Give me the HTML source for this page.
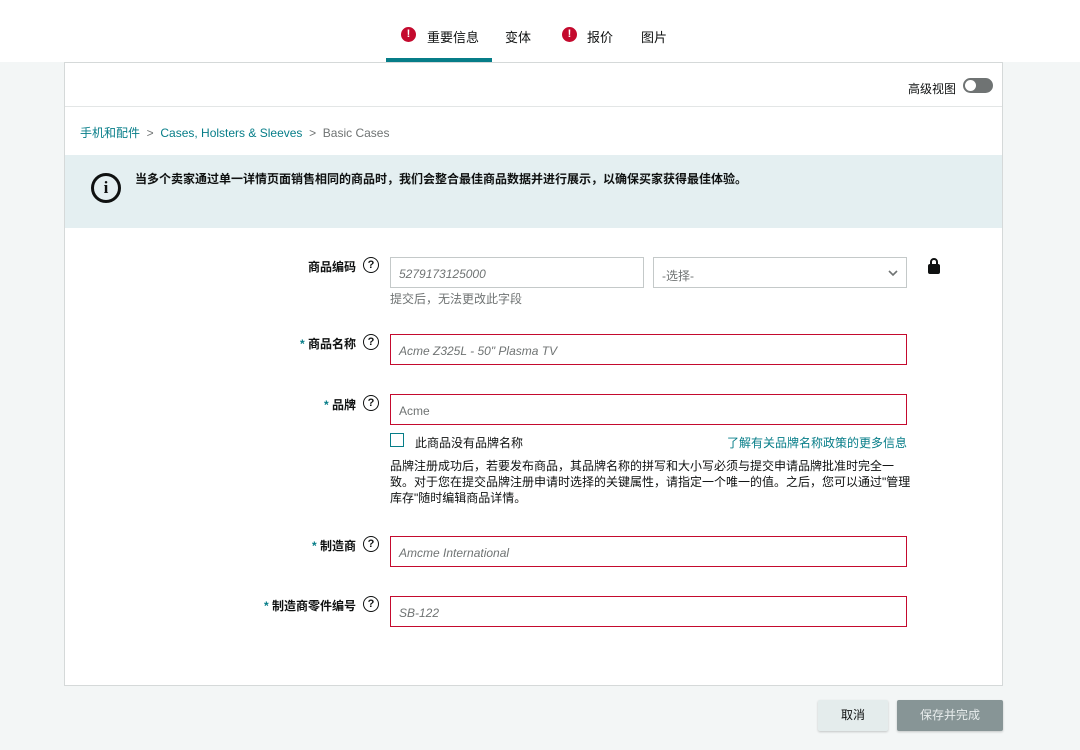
<!DOCTYPE html>
<html><head><meta charset="utf-8"><style>
*{box-sizing:border-box;margin:0;padding:0}
body{width:1080px;height:750px;background:#f3f6f6;font-family:"Liberation Sans","Noto Sans CJK SC",sans-serif;color:#0f1111;position:relative;overflow:hidden;font-size:12px}
.top{position:absolute;left:0;top:0;width:1080px;height:62px;background:#fff}
.tab{position:absolute;top:27px;font-size:13px;color:#0f1111}
.ex{position:absolute;top:27px;width:15px;height:15px;border-radius:50%;background:#c40a2e;color:#fff;font-size:11px;font-weight:bold;text-align:center;line-height:15px}
.card{position:absolute;left:64px;top:62px;width:939px;height:624px;background:#fff;border:1px solid #d5d9d9}
.a{position:absolute}
.lbl{position:absolute;font-size:12px;font-weight:bold;text-align:right;width:120px}
.q{position:absolute;width:16px;height:16px;border:1.5px solid #0f1111;border-radius:50%;font-size:11px;font-weight:bold;text-align:center;line-height:14px}
.in{position:absolute;height:31px;border:1px solid #c40a2e;font-size:12px;font-style:italic;color:#6f7373;padding:9px 8px}
.star{color:#067d88}
</style></head><body>
<div class="top">
<div class="ex" style="left:401px">!</div><div class="tab" style="left:427px">重要信息</div>
<div class="tab" style="left:505px">变体</div>
<div class="ex" style="left:562px">!</div><div class="tab" style="left:587px">报价</div>
<div class="tab" style="left:641px">图片</div>
<div class="a" style="left:386px;top:58px;width:106px;height:4px;background:#067d88"></div>
</div>
<div class="card">
<div class="a" style="left:843px;top:17px;font-size:12px">高级视图</div>
<div class="a" style="left:898px;top:15px;width:30px;height:15px;border-radius:8px;background:#6f7373"><div style="position:absolute;left:2px;top:2px;width:11px;height:11px;border-radius:50%;background:#fff"></div></div>
<div class="a" style="left:0;top:43px;width:937px;height:1px;background:#e3e6e6"></div>
<div class="a" style="left:15px;top:61px;font-size:12px;color:#067d88">手机和配件 <span style="color:#6f7373">&nbsp;&gt;&nbsp;</span> Cases, Holsters &amp; Sleeves <span style="color:#6f7373">&nbsp;&gt;&nbsp; Basic Cases</span></div>
<div class="a" style="left:0;top:92px;width:937px;height:73px;background:#e4eff1"></div>
<div class="a" style="left:26px;top:110px;width:30px;height:30px;border:3px solid #0f1111;border-radius:50%;font-weight:bold;font-size:17px;text-align:center;line-height:24px;font-family:'Liberation Serif',serif">i</div>
<div class="a" style="left:70px;top:107px;font-size:12px;font-weight:bold">当多个卖家通过单一详情页面销售相同的商品时，我们会整合最佳商品数据并进行展示，以确保买家获得最佳体验。</div>
</div>

<div class="lbl" style="left:236px;top:258px">商品编码</div><div class="q" style="left:363px;top:257px">?</div>
<div class="in" style="left:390px;top:257px;width:254px;border-color:#c4c9c9">5279173125000</div>
<div class="in" style="left:653px;top:257px;width:254px;border-color:#c4c9c9;font-style:normal">-选择-<svg style="position:absolute;right:8px;top:12px" width="10" height="7" viewBox="0 0 10 7"><path d="M1 1l4 4 4-4" fill="none" stroke="#6f7373" stroke-width="1.6"/></svg></div>
<div class="a" style="left:928px;top:264px;width:12px;height:10px;background:#0f1111;border-radius:2px"></div>
<div class="a" style="left:930px;top:258px;width:8px;height:9px;border:2px solid #0f1111;border-radius:4px 4px 0 0"></div>
<div class="a" style="left:390px;top:290px;color:#6f7373">提交后，无法更改此字段</div>

<div class="lbl" style="left:236px;top:335px"><span class="star">* </span>商品名称</div><div class="q" style="left:363px;top:334px">?</div>
<div class="in" style="left:390px;top:334px;width:517px">Acme Z325L - 50" Plasma TV</div>

<div class="lbl" style="left:236px;top:396px"><span class="star">* </span>品牌</div><div class="q" style="left:363px;top:395px">?</div>
<div class="in" style="left:390px;top:394px;width:517px;font-style:normal">Acme</div>
<div class="a" style="left:390px;top:433px;width:14px;height:14px;border:1.5px solid #067d88"></div>
<div class="a" style="left:415px;top:434px">此商品没有品牌名称</div>
<div class="a" style="left:727px;top:434px;color:#067d88">了解有关品牌名称政策的更多信息</div>
<div class="a" style="left:390px;top:458px;width:560px;line-height:16px;white-space:nowrap">品牌注册成功后，若要发布商品，其品牌名称的拼写和大小写必须与提交申请品牌批准时完全一<br>致。对于您在提交品牌注册申请时选择的关键属性，请指定一个唯一的值。之后，您可以通过"管理<br>库存"随时编辑商品详情。</div>

<div class="lbl" style="left:236px;top:537px"><span class="star">* </span>制造商</div><div class="q" style="left:363px;top:536px">?</div>
<div class="in" style="left:390px;top:536px;width:517px">Amcme International</div>

<div class="lbl" style="left:236px;top:597px"><span class="star">* </span>制造商零件编号</div><div class="q" style="left:363px;top:596px">?</div>
<div class="in" style="left:390px;top:596px;width:517px">SB-122</div>

<div class="a" style="left:818px;top:700px;width:70px;height:31px;background:#e4ecec;border-radius:2px;box-shadow:0 1px 2px rgba(0,0,0,.2);text-align:center;line-height:31px;font-size:12px">取消</div>
<div class="a" style="left:897px;top:700px;width:106px;height:31px;background:#879596;border-radius:2px;box-shadow:0 1px 2px rgba(0,0,0,.2);text-align:center;line-height:31px;font-size:12px;color:#e8eded">保存并完成</div>
</body></html>
